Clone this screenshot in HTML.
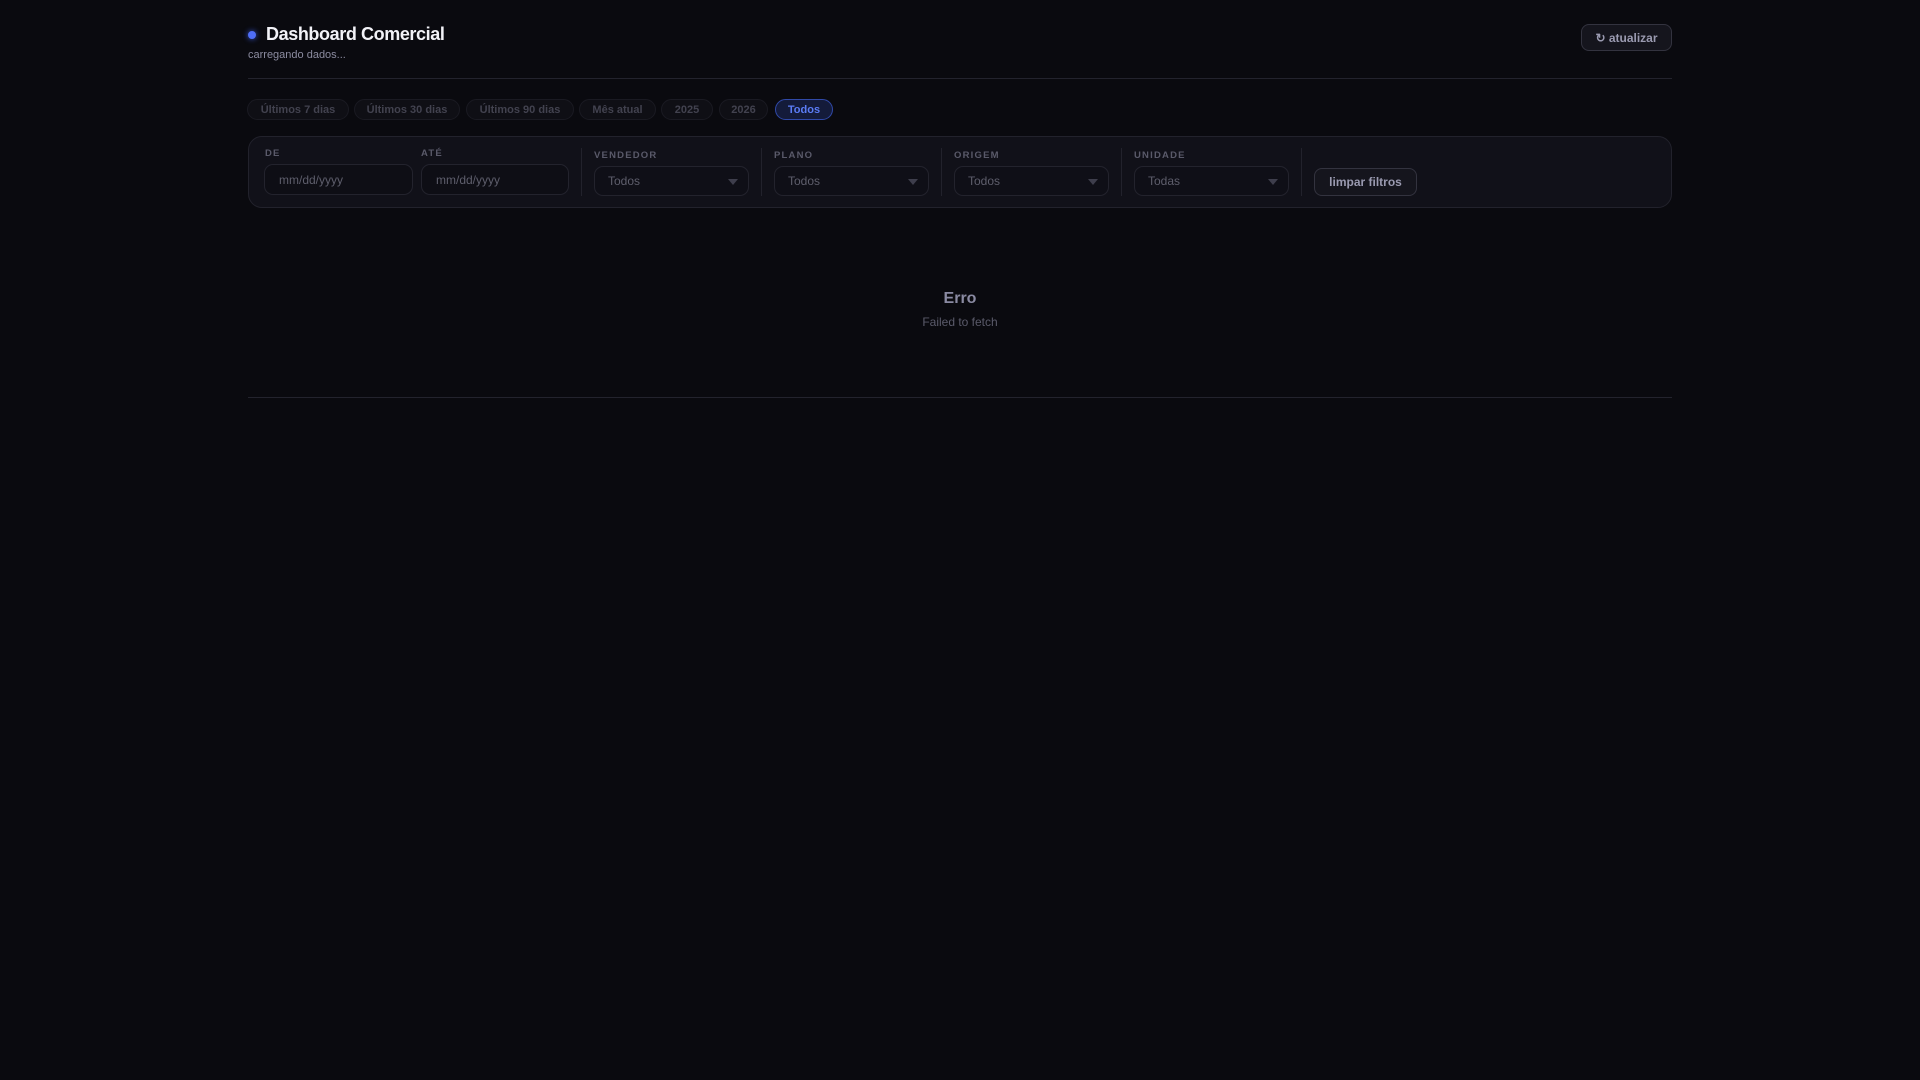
<!DOCTYPE html>
<html><head><meta charset="utf-8"><style>
*{box-sizing:border-box;margin:0;padding:0}
body{width:1920px;height:1080px;background:#0a0a0f;font-family:"Liberation Sans",sans-serif;position:relative;overflow:hidden}
.a{position:absolute}
.dot{left:248px;top:31px;width:8px;height:8px;border-radius:50%;background:#4f6ef7;box-shadow:0 0 6px #3b5bdb}
.title{left:266px;top:24px;font-size:18px;font-weight:bold;color:#f2f2f7;letter-spacing:-0.4px}
.sub{left:248px;top:49px;font-size:11px;color:#8c8ca0}
.hr{left:248px;width:1424px;height:1px;background:#23232d}
.btn{border:1px solid #33333f;background:#15151d;border-radius:8px;color:#9a9ab0;font-weight:bold;font-size:12px;display:flex;align-items:center;justify-content:center}
.chip{top:99px;height:21px;border:1px solid #1a1a22;background:#0f0f15;border-radius:11px;color:#42424f;font-size:11px;font-weight:bold;display:flex;align-items:center;justify-content:center}
.chip.on{background:#141b3a;border-color:#3049a8;color:#5b7cf5}
.panel{left:248px;top:136px;width:1424px;height:72px;background:#111119;border:1px solid #22222c;border-radius:14px}
.lab{font-size:9.5px;font-weight:bold;color:#5a5a6a;letter-spacing:1.2px}
.inp{height:31px;border:1px solid #23232d;background:#0e0e15;border-radius:9px;color:#5e5e6c;font-size:12px;padding-left:14px;display:flex;align-items:center}
.sel{height:30px;top:166px;border:1px solid #23232d;background:#0f0f17;border-radius:9px;color:#5e5e6c;font-size:12px;padding-left:13px;display:flex;align-items:center}
.sel:after{content:"";position:absolute;right:10px;top:12px;border-left:5px solid transparent;border-right:5px solid transparent;border-top:6px solid #3e3e4c}
.div{top:148px;width:1px;height:48px;background:#22222c}
</style></head><body>
<div class="a dot"></div>
<div class="a title">Dashboard Comercial</div>
<div class="a sub">carregando dados...</div>
<div class="a btn" style="left:1581px;top:24px;width:91px;height:27px">↻ atualizar</div>
<div class="a hr" style="top:78px"></div>
<div class="a chip" style="left:247px;width:102px">Últimos 7 dias</div>
<div class="a chip" style="left:354px;width:106px">Últimos 30 dias</div>
<div class="a chip" style="left:466px;width:108px">Últimos 90 dias</div>
<div class="a chip" style="left:579px;width:77px">Mês atual</div>
<div class="a chip" style="left:661px;width:52px">2025</div>
<div class="a chip" style="left:719px;width:49px">2026</div>
<div class="a chip on" style="left:775px;width:58px">Todos</div>
<div class="a panel"></div>
<div class="a lab" style="left:265px;top:148px">DE</div>
<div class="a lab" style="left:421px;top:148px">ATÉ</div>
<div class="a inp" style="left:264px;top:164px;width:149px">mm/dd/yyyy</div>
<div class="a inp" style="left:421px;top:164px;width:148px">mm/dd/yyyy</div>
<div class="a div" style="left:581px"></div>
<div class="a lab" style="left:594px;top:150px">VENDEDOR</div>
<div class="a sel" style="left:594px;width:155px">Todos</div>
<div class="a div" style="left:761px"></div>
<div class="a lab" style="left:774px;top:150px">PLANO</div>
<div class="a sel" style="left:774px;width:155px">Todos</div>
<div class="a div" style="left:941px"></div>
<div class="a lab" style="left:954px;top:150px">ORIGEM</div>
<div class="a sel" style="left:954px;width:155px">Todos</div>
<div class="a div" style="left:1121px"></div>
<div class="a lab" style="left:1134px;top:150px">UNIDADE</div>
<div class="a sel" style="left:1134px;width:155px">Todas</div>
<div class="a div" style="left:1301px"></div>
<div class="a btn" style="left:1314px;top:168px;width:103px;height:28px">limpar filtros</div>
<div class="a" style="left:860px;width:200px;top:290px;text-align:center;font-size:16px;font-weight:bold;color:#8a8aa2">Erro</div>
<div class="a" style="left:860px;width:200px;top:315px;text-align:center;font-size:12px;color:#5a5a6a">Failed to fetch</div>
<div class="a hr" style="top:397px"></div>
</body></html>
